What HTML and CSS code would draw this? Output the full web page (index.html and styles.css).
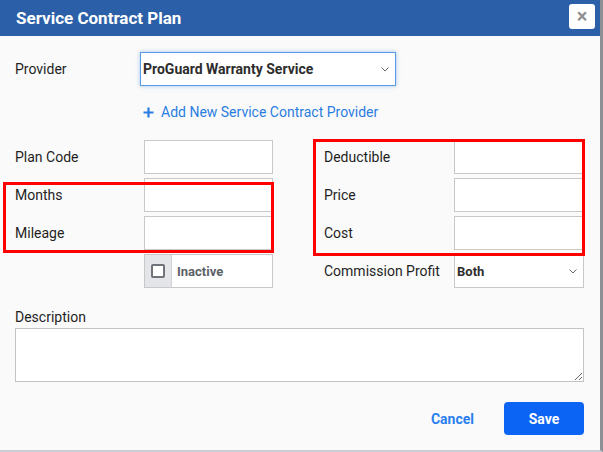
FILE: index.html
```html
<!DOCTYPE html>
<html>
<head>
<meta charset="utf-8">
<link rel="stylesheet" href="styles.css">
</head>
<body>
<div class="modal">
  <div class="header">
    <div class="title">Service Contract Plan</div>
    <div class="close">×</div>
  </div>
  <div class="content">
    <div class="provider-row">
      <div class="label provider-label">Provider</div>
      <div class="select focused">
        <span class="sel-text">ProGuard Warranty Service</span>
        <svg class="chev" width="8" height="5" viewBox="0 0 8 5"><polyline points="0.5,0.5 4,4 7.5,0.5" fill="none" stroke="#666" stroke-width="1"/></svg>
      </div>
    </div>
    <div class="add-link">
      <svg class="plus" width="11" height="11" viewBox="0 0 11 11"><path d="M5.5 0.5 V10.5 M0.5 5.5 H10.5" stroke="#2a7de1" stroke-width="2.2" fill="none"/></svg>
      <span>Add New Service Contract Provider</span>
    </div>
    <div class="grid">
      <div class="label">Plan Code</div>
      <input class="input" type="text">
      <div></div>
      <div class="label">Deductible</div>
      <input class="input" type="text">

      <div class="label">Months</div>
      <input class="input" type="text">
      <div></div>
      <div class="label">Price</div>
      <input class="input" type="text">

      <div class="label">Mileage</div>
      <input class="input" type="text">
      <div></div>
      <div class="label">Cost</div>
      <input class="input" type="text">

      <div></div>
      <div class="check-group">
        <div class="addon"><span class="box"></span></div>
        <div class="check-label">Inactive</div>
      </div>
      <div></div>
      <div class="label">Commission Profit</div>
      <div class="select">
        <span class="sel-text">Both</span>
        <svg class="chev" width="8" height="5" viewBox="0 0 8 5"><polyline points="0.5,0.5 4,4 7.5,0.5" fill="none" stroke="#666" stroke-width="1"/></svg>
      </div>
    </div>
    <div class="label desc-label">Description</div>
    <textarea class="textarea"></textarea>
    <div class="footer">
      <span class="cancel">Cancel</span>
      <span class="save">Save</span>
    </div>
  </div>
  <div class="mark mark-left"></div>
  <div class="mark mark-right"></div>
</div>
</body>
</html>
```

FILE: styles.css
```css
* { box-sizing: border-box; }
html, body { margin: 0; padding: 0; }
body {
  background: #fafafa;
  font-family: Roboto, "Liberation Sans", sans-serif;
  color: #1f1f1f;
}
.modal {
  position: relative;
  width: 603px;
  height: 452px;
  background: #fafafa;
  border-right: 3px solid #8d9095;
  border-bottom: 2px solid #c9ccd3;
}
.header {
  height: 36px;
  background: #2b5fa8;
  display: flex;
  align-items: center;
  justify-content: space-between;
  padding: 0 5px 0 16px;
}
.title {
  color: #fff;
  font-weight: 700;
  font-size: 17px;
  margin-top: -1px;
}
.close {
  width: 26px;
  height: 25px;
  background: #fff;
  border-radius: 3px;
  color: #8f8f8f;
  font-weight: 700;
  font-size: 20px;
  line-height: 25px;
  text-align: center;
  margin-top: -4px;
}
.content {
  padding: 16px 16px 0 15px;
}
.label {
  font-size: 14px;
  display: flex;
  align-items: center;
  line-height: 17px;
}
.provider-row {
  display: flex;
  align-items: center;
}
.provider-label { width: 125px; }
.select {
  display: flex;
  align-items: center;
  justify-content: space-between;
  background: #fff;
  border: 1px solid #c8c8c8;
  padding: 0 6px 0 2px;
  height: 34px;
  font-size: 13px;
  font-weight: 700;
  color: #2d2d2d;
}
.provider-row .select {
  width: 256px;
  padding-right: 6px;
  font-size: 14px;
}
.select.focused {
  border-color: #5a9be6;
  box-shadow: 0 0 4px rgba(80, 150, 230, 0.55);
}
.chev { display: block; }
.add-link {
  margin: 18px 0 0 128px;
  display: flex;
  align-items: center;
  gap: 7px;
  color: #2a7de1;
  font-size: 14px;
  line-height: 17px;
}
.plus { display: block; }
.grid {
  margin-top: 19px;
  display: grid;
  grid-template-columns: 129px 129px 51px 130px 130px;
  grid-auto-rows: 34px;
  row-gap: 4px;
}
.input {
  display: block;
  width: 100%;
  height: 34px;
  margin: 0;
  border: 1px solid #c8c8c8;
  background: #fff;
  font: inherit;
  outline: none;
}
.check-group {
  display: flex;
  border: 1px solid #c8c8c8;
  background: #fff;
}
.addon {
  width: 27px;
  background: #e3e5e9;
  border-right: 1px solid #cfd1d5;
  display: flex;
  align-items: center;
  justify-content: center;
}
.box {
  width: 14px;
  height: 14px;
  border: 2px solid #6f737a;
  border-radius: 2px;
  background: #fff;
}
.check-label {
  display: flex;
  align-items: center;
  padding-left: 5px;
  font-size: 13px;
  font-weight: 700;
  color: #5c6068;
}
.desc-label {
  margin-top: 21px;
}
.textarea {
  display: block;
  margin-top: 2px;
  width: 569px;
  height: 54px;
  border: 1px solid #c4c4c4;
  background: #fff;
  font: inherit;
  outline: none;
}
.footer {
  margin-top: 20px;
  display: flex;
  justify-content: flex-end;
  align-items: center;
  gap: 30px;
}
.cancel {
  color: #2a7ff0;
  font-size: 14px;
  font-weight: 700;
}
.save {
  width: 80px;
  height: 33px;
  background: #0b64f4;
  border-radius: 4px;
  color: #fff;
  font-size: 14px;
  font-weight: 700;
  display: flex;
  align-items: center;
  justify-content: center;
}
.mark {
  position: absolute;
  border: 3px solid #ff0000;
}
.mark-left {
  left: 3px;
  top: 182px;
  width: 271px;
  height: 71px;
}
.mark-right {
  left: 313px;
  top: 139px;
  width: 272px;
  height: 117px;
}
```
